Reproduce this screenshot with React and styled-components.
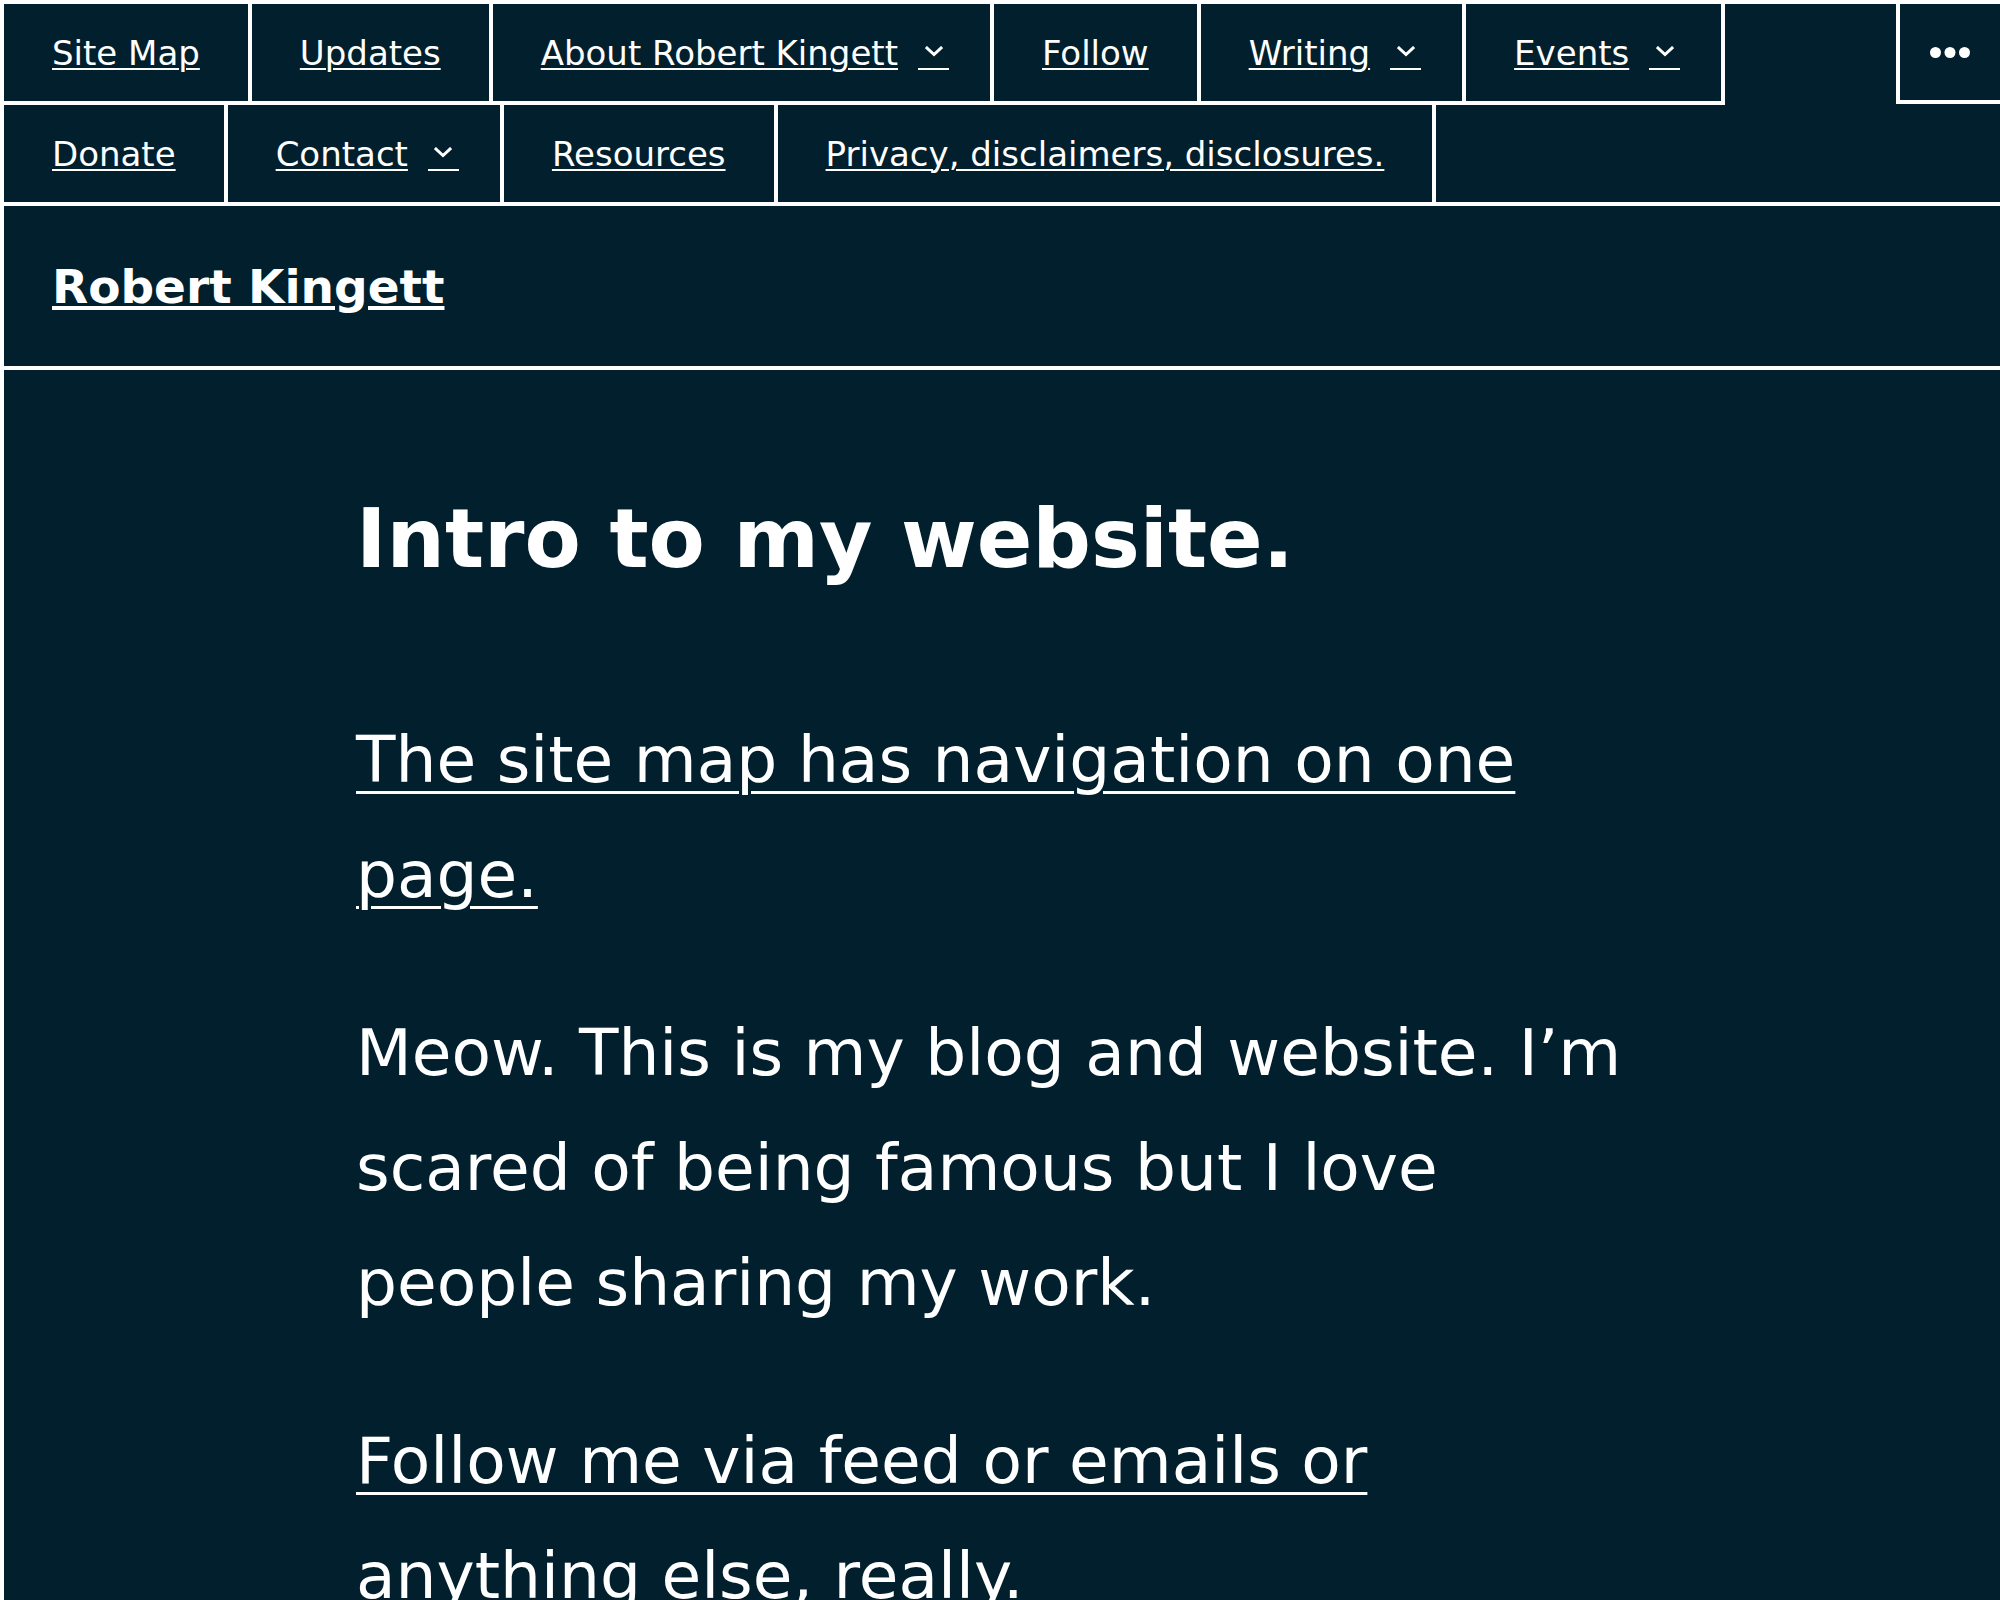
import React from 'react'
import styled, { createGlobalStyle } from 'styled-components'

const navItems = [
  { label: 'Site Map' },
  { label: 'Updates' },
  { label: 'About Robert Kingett', sub: true },
  { label: 'Follow' },
  { label: 'Writing', sub: true },
  { label: 'Events', sub: true },
  { label: 'Donate' },
  { label: 'Contact', sub: true },
  { label: 'Resources' },
  { label: 'Privacy, disclaimers, disclosures.' },
]

const Chevron = () => (
  <svg width="18" height="11" viewBox="0 0 18 11" aria-hidden="true">
    <polyline
      points="2,2 9,8.5 16,2"
      fill="none"
      stroke="#fff"
      strokeWidth="3"
      strokeLinecap="square"
    />
  </svg>
)

const MoreDots = () => (
  <svg width="40" height="11" viewBox="0 0 40 11" aria-hidden="true">
    <circle cx="5.5" cy="5.5" r="5.5" fill="#fff" />
    <circle cx="20" cy="5.5" r="5.5" fill="#fff" />
    <circle cx="34.5" cy="5.5" r="5.5" fill="#fff" />
  </svg>
)

const App = () => {
  return (
    <>
      <GlobalStyle />
      <Page>
        <Frame>
          <NavBar>
            <NavList>
              {navItems.map((item) => (
                <NavItem key={item.label} $sub={item.sub}>
                  <NavLink href="#">{item.label}</NavLink>
                  {item.sub && (
                    <SubToggle type="button" aria-label={`${item.label} submenu`}>
                      <Chevron />
                    </SubToggle>
                  )}
                </NavItem>
              ))}
            </NavList>
            <MoreButton type="button" aria-label="More">
              <MoreDots />
            </MoreButton>
          </NavBar>

          <SiteHeader>
            <SiteTitle href="#">Robert Kingett</SiteTitle>
          </SiteHeader>

          <Main>
            <Content>
              <Title>Intro to my website.</Title>
              <Paragraph>
                <TextLink href="#">The site map has navigation on one page.</TextLink>
              </Paragraph>
              <Paragraph>
                Meow. This is my blog and website. I’m scared of being famous but I love
                people sharing my work.
              </Paragraph>
              <Paragraph>
                <TextLink href="#">Follow me via feed or emails or anything else, really.</TextLink>
              </Paragraph>
            </Content>
          </Main>
        </Frame>
      </Page>
    </>
  )
}

const GlobalStyle = createGlobalStyle`
  html, body {
    margin: 0;
    padding: 0;
    background: #fff;
  }
  body {
    font-family: "DejaVu Sans", Verdana, sans-serif;
    color: #fff;
  }
  * {
    box-sizing: border-box;
  }
`

const Page = styled.div`
  min-height: 100vh;
  padding: 4px 0 0 4px;
  background: #fff;
`

const Frame = styled.div`
  min-height: calc(100vh - 4px);
  background: #011f2d;
`

const NavBar = styled.header`
  display: flex;
  align-items: flex-start;
  border-bottom: 4px solid #fff;
`

const NavList = styled.ul`
  flex: 1;
  display: flex;
  flex-wrap: wrap;
  list-style: none;
  margin: 0 0 -4px;
  padding: 0;
`

const NavItem = styled.li`
  display: flex;
  align-items: center;
  gap: 20px;
  height: 101px;
  padding: 0 ${(p) => (p.$sub ? '41px' : '48px')} 0 48px;
  border-right: 4px solid #fff;
  border-bottom: 4px solid #fff;
`

const NavLink = styled.a`
  font-size: 34px;
  color: #fff;
  white-space: nowrap;
  text-decoration: underline;
  text-decoration-thickness: 2px;
  text-underline-offset: 3px;
`

const SubToggle = styled.button`
  display: flex;
  justify-content: center;
  align-items: flex-start;
  width: 31px;
  height: 28px;
  margin-top: 6px;
  padding: 4px 0 0;
  background: none;
  border: none;
  border-bottom: 2px solid #fff;
  cursor: pointer;
`

const MoreButton = styled.button`
  display: flex;
  align-items: center;
  justify-content: center;
  width: 104px;
  height: 100px;
  padding: 0;
  background: #011f2d;
  border: none;
  border-left: 4px solid #fff;
  border-bottom: 4px solid #fff;
  cursor: pointer;
`

const SiteHeader = styled.div`
  display: flex;
  align-items: center;
  height: 164px;
  padding: 0 48px;
  border-bottom: 4px solid #fff;
`

const SiteTitle = styled.a`
  font-size: 47px;
  font-weight: 700;
  color: #fff;
  text-decoration: underline;
  text-decoration-thickness: 4px;
  text-underline-offset: 3px;
`

const Main = styled.main`
  padding-top: 120px;
`

const Content = styled.div`
  max-width: 1292px;
  margin: 0 auto;
`

const Title = styled.h1`
  margin: 0 0 114px;
  font-size: 82px;
  font-weight: 700;
  line-height: 1.2;
`

const Paragraph = styled.p`
  margin: 0 0 63px;
  font-size: 64.6px;
  line-height: 115px;
`

const TextLink = styled.a`
  color: #fff;
  text-decoration: underline;
  text-decoration-thickness: 3px;
  text-underline-offset: 9px;
`

export default App
